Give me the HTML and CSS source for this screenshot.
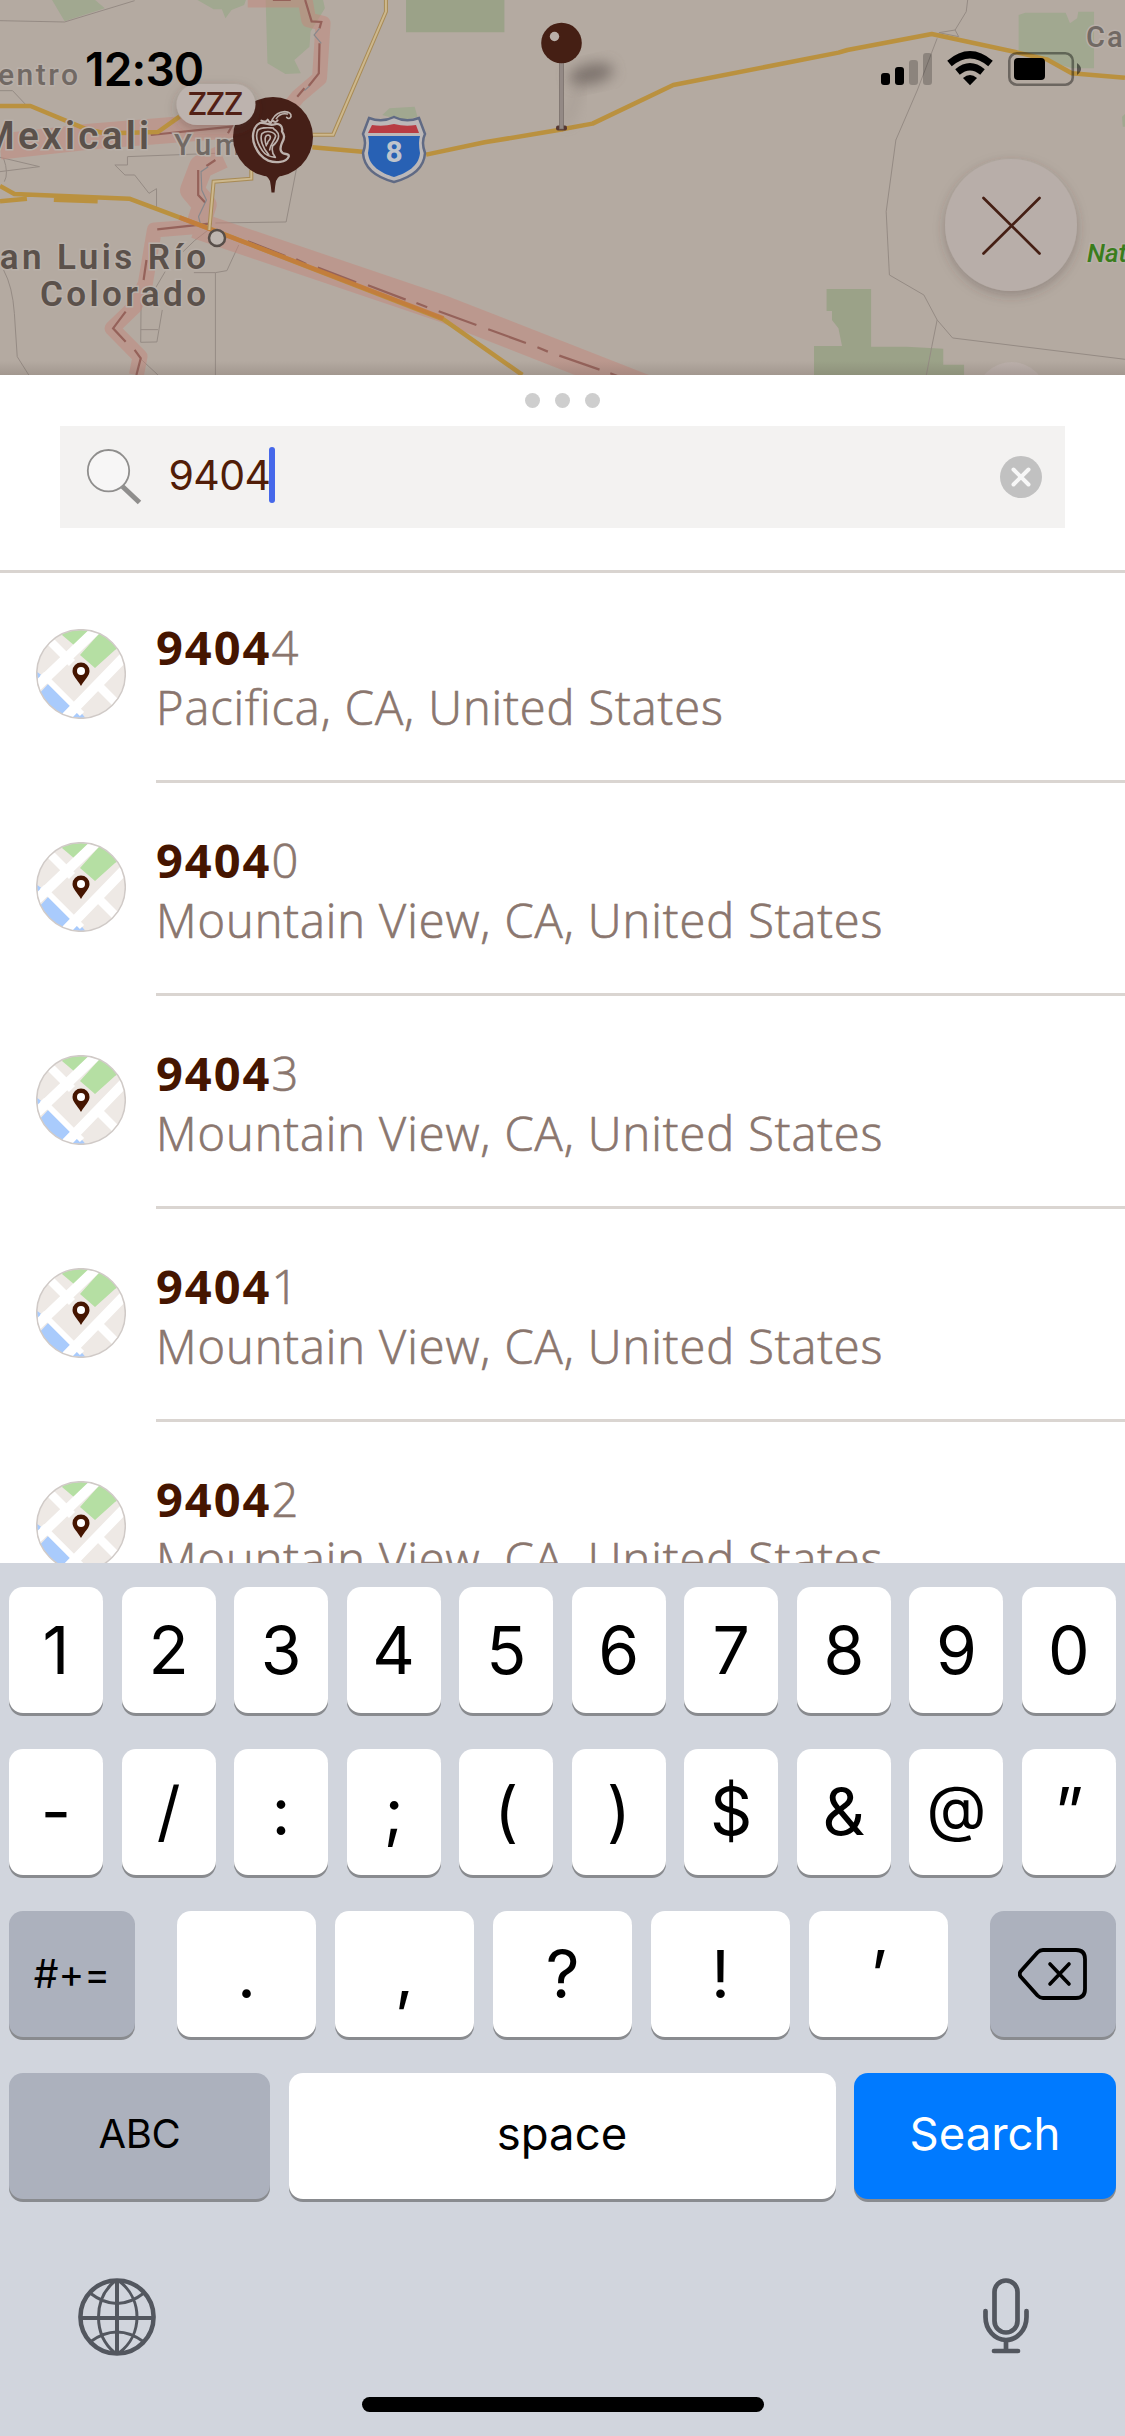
FILE: index.html
```html
<!DOCTYPE html>
<html lang="en">
<head>
<meta charset="utf-8">
<title>Location search</title>
<link rel="stylesheet" href="styles.css">
</head>
<body>
<svg class="defs" width="0" height="0" aria-hidden="true">
  <defs>
    <clipPath id="disc"><circle cx="45" cy="45" r="44"/></clipPath>
    <symbol id="place" viewBox="0 0 90 90">
      <g clip-path="url(#disc)">
        <rect width="90" height="90" fill="#eee9e5"/>
        <path d="M61 7L66 1L90 14L79 21L59 39L44 26ZM26 6L30 -2H60L39 17Z" fill="#b5dfa3"/>
        <path d="M13 54L36 78L25 92L2 66ZM0 42L8 48L0 56ZM42 80L52 92H32Z" fill="#a9cbfc"/>
        <path d="M62 -1L-4 62M92 24L30 88" stroke="#fff" stroke-width="10"/>
        <path d="M12 10L36 34M64 58L88 82" stroke="#fff" stroke-width="8.500"/>
        <path d="M6 45L46 85" stroke="#fff" stroke-width="6"/>
      </g>
      <path d="M45 57C41 50 36.500 47 36.500 42A8.500 8.500 0 0 1 53.500 42C53.500 47 49 50 45 57Z" fill="#451500"/>
      <circle cx="45" cy="42" r="4" fill="#fff"/>
      <circle cx="45" cy="45" r="44.300" fill="none" stroke="#d0cac7" stroke-width="1.500"/>
    </symbol>
  </defs>
</svg>
<main class="screen">
  <section class="map">
    <svg class="map-art" viewBox="0 0 1125 375" width="1125" height="375">
      <defs>
        <filter id="soft" x="-50%" y="-50%" width="200%" height="200%"><feGaussianBlur stdDeviation="7"/></filter>
        <filter id="lift" x="-30%" y="-30%" width="160%" height="160%"><feDropShadow dx="0" dy="4" stdDeviation="6" flood-color="#4b3a34" flood-opacity=".3"/></filter>
        <linearGradient id="edge" x2="0" y2="1"><stop stop-color="#5a4d48" stop-opacity="0"/><stop offset="1" stop-color="#5a4d48" stop-opacity=".2"/></linearGradient>
      </defs>
      <rect width="1125" height="375" fill="#b4aaa1"/>
      <g class="geo" transform="scale(.359 .3333)">
        <g fill="#9ba288">
          <path d="M145 0L180 64L292 25L265 0ZM550 0L595 28L618 28L628 55L645 30L680 15L685 0ZM740 0L745 190L795 222L838 220L820 180L862 140L865 95L905 25L900 0Z" fill="#a1a890"/>
          <path d="M1131 0H1405V97H1131Z"/>
          <path d="M1065 345L1085 325L1155 320L1163 350L1120 362Z" fill="#a1a890"/>
        </g>
        <g class="thin">
          <path d="M0 62L180 66L375 2M0 272L35 272L70 312M0 472L110 500L0 515M10 475Q25 520 12 545M600 460L355 470V495H320L348 525H375L415 580L436 566V625M827 500L797 666L600 669M665 735L632 812L600 818H540M600 818V1125M393 900L392 1027L437 1026L452 930M392 989H440M10 810Q35 860 40 940L48 1070L80 1125M580 690Q540 720 510 755M460 815L430 870M390 1075L440 1125"/>
        </g>
        <g class="border-glow">
          <path d="M690 0L850 0L860 60L900 70L890 235L830 290L800 330" class="narrow"/>
          <path d="M0 440L250 410L650 375" style="stroke-width:26"/>
          <path d="M620 470L560 500L535 570L570 615L550 680"/>
          <path d="M550 680L430 690L405 850L375 920L312 985L390 1070L380 1125" class="narrow"/>
          <path d="M545 675L1230 925L1870 1195" style="stroke-width:27"/>
        </g>
        <g class="border-line">
          <path d="M760 0H810M850 0L868 64L895 66L890 85M890 130L888 220L860 258M848 265L828 290M420 405L645 380L635 400M600 480L575 498M552 510V585L572 608M438 688L590 670M408 780L400 840M350 935L315 985L350 1025M375 1050L392 1075L380 1125"/>
          <path d="M630 705L655 713M690 724L795 768M825 778L853 792M885 803L992 847M1025 856L1130 899M1160 909L1190 922M1222 934L1327 975M1360 988L1465 1029M1497 1042L1526 1055M1558 1067L1670 1109M1700 1120L1720 1128"/>
        </g>
        <path class="river" d="M890 85L875 105L895 130M862 258L848 272M580 500L560 515L562 570L575 600L553 650L560 680"/>
        <g class="road">
          <path d="M0 318H85L235 385L310 405M310 400L440 396L500 350M0 558L40 582L360 596L600 693L1235 958L1455 1125M0 604L75 596M150 599L272 604M870 442L1010 455M1187 464L1350 427L1568 388"/>
        </g>
        <path d="M500 652L1235 955" stroke="#c47b3c" stroke-width="4.500" fill="none" opacity=".85"/>
        <g class="minor-case"><path d="M1075 0V35L928 404H870M700 510V536L595 545L583 690"/></g>
        <g class="minor"><path d="M1075 0V35L928 404H870M700 510V536L595 545L583 690"/></g>
      </g>
      <g class="geo" transform="translate(562 0) scale(.359 .3333)">
        <path d="M1272 45L1290 38H1403L1415 70L1435 55L1438 35H1482V205H1420L1272 155ZM1560 350L1570 340V380H1562Z" fill="#a1a890"/>
        <path d="M737 867H861V1040H960L1062 1046V1094H1120V1125H702V1038H780L770 985L752 960V933H737Z" fill="#9ba288"/>
        <path class="thin-line" d="M1130 0L1126 35L1095 90L1050 98L1105 110L1095 90M1045 115L990 270L930 420L903 635L912 825L1008 885L1045 960L1088 1014L1568 1078M1045 960L1030 1040L1015 1125"/>
        <g class="road"><path d="M0 388L85 371L310 255L770 158L795 150L1030 102L1270 158L1350 178L1420 220L1568 233"/></g>
      </g>
      <circle cx="1011.500" cy="397" r="35" fill="#bbb0ab"/>
      <rect y="361" width="1125" height="14" fill="url(#edge)"/>

      <g class="place-label">
        <text x="78" y="85" text-anchor="end" font-size="30" textLength="102">Centro</text>
        <text x="149" y="149" text-anchor="end" class="strong" font-size="38.500" textLength="168">Mexicali</text>
        <text x="174" y="155" font-size="29" textLength="86">Yuma</text>
        <text x="206" y="269" text-anchor="end" class="strong" font-size="35" textLength="231">San Luis Río</text>
        <text x="206" y="306" text-anchor="end" class="strong" font-size="35" textLength="166">Colorado</text>
        <text x="1086" y="47" font-size="29" letter-spacing="2">Ca</text>
        <text x="1087" y="262" font-size="26" class="park">Nat</text>
      </g>
      <circle cx="217" cy="238" r="8" fill="#bdb5af" stroke="#574e49" stroke-width="2.500"/>

      <path d="M369 118Q382 123 394 117Q406 123 419 118L425 134Q421 142 425 153C424 170 409 178 394 182C379 178 364 170 363 153Q367 142 363 134Z" fill="#bcb8b8" stroke="#606a84" stroke-width="2.500"/>
      <path d="M372 125Q383 127 394 124Q405 127 416 125L419 133H368Z" fill="#b83c43"/>
      <path d="M368 136H420Q418 142 420 153C419 166 407 173 394 177C381 173 369 166 368 153Q370 142 368 136Z" fill="#2861b4"/>
      <text x="394" y="161.500" text-anchor="middle" class="shield-text">8</text>

      <circle cx="273" cy="137" r="40" fill="#451f17"/>
      <path d="M255 171Q268 175 270 181Q271 186 271.500 192.500H274.500Q275 186 276 181Q278 175 291 171Z" fill="#451f17"/>
      <g transform="translate(160 76) scale(.3333)" fill="none" stroke="#bdb2ad" stroke-linecap="round" stroke-linejoin="round">
        <path d="M304 134Q318 141 323 131L331 142L337 133Q347 143 353 133" stroke-width="6"/>
        <path d="M337 130Q350 108 374 107Q395 108 393 122Q388 132 380 124M349 128Q360 110 382 114" stroke-width="5"/>
        <path d="M300 141C278 151 274 185 285 210C294 229 302 243 325 254C346 262 379 260 386 242Q388 235 378 234C362 233 358 220 365 203C375 186 374 178 366 166C370 149 356 140 343 145C325 151 315 136 300 141Z" stroke-width="7"/>
        <path d="M340 156C319 155 306 153 294 162C284 180 293 203 307 224Q319 242 346 244Q333 229 338 210C356 194 362 177 348 164Q337 156 340 156M326 236C309 217 298 188 306 173C319 162 343 166 347 180C344 195 330 205 329 222M319 209C312 187 316 177 325 177Q335 180 329 191Q322 197 322 204" stroke-width="5"/>
      </g>
      <rect x="176.500" y="84" width="79" height="41" rx="20.500" fill="#bdb3ae" filter="url(#lift)"/>
      <text x="215.500" y="115" text-anchor="middle" class="zzz" textLength="56">ZZZ</text>

      <ellipse cx="591" cy="74" rx="23" ry="10" transform="rotate(-12 591 74)" fill="#6b615b" opacity=".75" filter="url(#soft)"/>
      <path d="M566 125L580 84" stroke="#6b615b" stroke-width="6" opacity=".25" filter="url(#soft)"/>
      <rect x="556" y="125.500" width="11" height="5" rx="2" fill="#563831"/>
      <rect x="559.500" y="60" width="4" height="69" fill="#938985" stroke="#756b67" stroke-width=".7"/>
      <circle cx="561.500" cy="43" r="20.300" fill="#451f14"/>
      <circle cx="554.500" cy="36.500" r="4.700" fill="#b9afa9"/>

      <circle cx="1011" cy="225" r="66" fill="#b8aea9" filter="url(#lift)"/>
      <path d="M983.500 198L1039.500 253.500M1039.500 198L983.500 253.500" stroke="#451f14" stroke-width="2.700" stroke-linecap="round"/>
    </svg>
    <header class="status">
      <span class="clock">12:30</span>
      <svg class="status-icons" viewBox="880 50 204 38" width="204" height="38">
        <rect x="881" y="73" width="9" height="12" rx="3"/>
        <rect x="895" y="67" width="9" height="18" rx="3"/>
        <rect x="909" y="60" width="9" height="25" rx="3" fill-opacity=".22"/>
        <rect x="923" y="53" width="9" height="32" rx="3" fill-opacity=".22"/>
        <path d="M949.500 63.500Q970 46 990.500 63.500" fill="none" stroke="#000" stroke-width="7"/>
        <path d="M957.500 72Q970 61.500 982.500 72" fill="none" stroke="#000" stroke-width="7"/>
        <path d="M963 78Q970 72 977 78L970 85.200Z"/>
        <rect x="1009.300" y="53.300" width="63.500" height="31.400" rx="7.500" fill="none" stroke="#000" stroke-opacity=".4" stroke-width="2.600"/>
        <rect x="1014" y="58" width="31" height="22" rx="4"/>
        <path d="M1077 63Q1081 66 1081 69T1077 75Z" fill-opacity=".5"/>
      </svg>
    </header>
  </section>

  <section class="sheet">
    <div class="search-head">
      <div class="grabber"><i></i><i></i><i></i></div>
      <div class="search-box">
        <svg width="56" height="60" viewBox="86 447 56 60">
          <path d="M122.500 486.500L139.500 502.500" stroke="#8f8e8d" stroke-width="5"/>
          <circle cx="108.500" cy="470.700" r="20.700" fill="#f7f6f6" stroke="#8f8e8d" stroke-width="1.800"/>
        </svg>
        <span class="query">9404</span><span class="caret"></span>
        <svg class="clear" width="42" height="42" viewBox="0 0 42 42">
          <circle cx="21" cy="21" r="21" fill="#c1c1c1"/>
          <path d="M13.500 13.500L28.500 28.500M28.500 13.500L13.500 28.500" stroke="#f7f7f7" stroke-width="4" stroke-linecap="round"/>
        </svg>
      </div>
    </div>
    <ul class="results">
      <li><svg class="thumb"><use href="#place"/></svg><div class="entry"><p class="zip"><b>9404</b>4</p><p class="city">Pacifica, CA, United States</p></div></li>
      <li><svg class="thumb"><use href="#place"/></svg><div class="entry"><p class="zip"><b>9404</b>0</p><p class="city">Mountain View, CA, United States</p></div></li>
      <li><svg class="thumb"><use href="#place"/></svg><div class="entry"><p class="zip"><b>9404</b>3</p><p class="city">Mountain View, CA, United States</p></div></li>
      <li><svg class="thumb"><use href="#place"/></svg><div class="entry"><p class="zip"><b>9404</b>1</p><p class="city">Mountain View, CA, United States</p></div></li>
      <li><svg class="thumb"><use href="#place"/></svg><div class="entry"><p class="zip"><b>9404</b>2</p><p class="city">Mountain View, CA, United States</p></div></li>
    </ul>
  </section>

  <section class="keyboard">
    <div class="row ten"><span class="key">1</span><span class="key">2</span><span class="key">3</span><span class="key">4</span><span class="key">5</span><span class="key">6</span><span class="key">7</span><span class="key">8</span><span class="key">9</span><span class="key">0</span></div>
    <div class="row ten signs"><span class="key">-</span><span class="key">/</span><span class="key">:</span><span class="key">;</span><span class="key">(</span><span class="key">)</span><span class="key">$</span><span class="key">&amp;</span><span class="key at">@</span><span class="key">”</span></div>
    <div class="row punct">
      <span class="key gray symbols">#+=</span>
      <div class="marks"><span class="key">.</span><span class="key">,</span><span class="key">?</span><span class="key">!</span><span class="key">’</span></div>
      <span class="key gray">
        <svg width="70" height="54" viewBox="0 0 70 54" fill="none" stroke="#000" stroke-linecap="round" stroke-linejoin="round">
          <path d="M25 3H58Q67 3 67 12V42Q67 51 58 51H25Q22 51 19.500 48.500L2.500 29.500Q1 27 2.500 24.500L19.500 5.500Q22 3 25 3Z" stroke-width="3.800"/>
          <path d="M32 17L51 37M51 17L32 37" stroke-width="3.600"/>
        </svg>
      </span>
    </div>
    <div class="row bottom"><span class="key gray abc">ABC</span><span class="key space">space</span><span class="key go">Search</span></div>
    <div class="tools">
      <svg width="78" height="78" viewBox="-39 -39 78 78" fill="none" stroke="#53575f">
        <circle r="36.600" stroke-width="4.500"/>
        <path d="M0-37V37M-37 1H37" stroke-width="4"/>
        <path d="M-2-36C-24-18-24 18-2 36M2-36C26-18 26 18 2 36M-27-24Q0-3 27-24M-27 25Q0 5 27 25" stroke-width="3"/>
      </svg>
      <svg width="46" height="76" viewBox="0 0 46 76" fill="none" stroke="#53575f" stroke-width="4.700" stroke-linecap="round">
        <rect x="11.500" y="2.500" width="23" height="52" rx="11.500"/>
        <path d="M2.500 33V39A20.500 23 0 0 0 43.500 39V33M23 63V73M11 73H35"/>
      </svg>
    </div>
    <div class="home"></div>
  </section>
</main>
</body>
</html>
```
FILE: styles.css
```css
* { box-sizing: border-box; }
body { margin: 0; font-family: Inter, "Liberation Sans", sans-serif; color: #000; }
.defs { display: block; }
.screen { width: 1125px; height: 2436px; overflow: hidden; display: flex; flex-direction: column; background: #fff; }

.map { height: 375px; flex: none; display: grid; overflow: hidden; }
.map > * { grid-area: 1 / 1; }
.map-art { display: block; }
.geo path { vector-effect: non-scaling-stroke; }
.thin path, .thin-line { fill: none; stroke: #958b84; stroke-width: 1; }
.border-glow { opacity: .5; }
.border-glow path { fill: none; stroke: #c3877c; stroke-width: 24; stroke-linejoin: round; }
.border-glow .narrow { stroke-width: 15; }
.border-line path { fill: none; stroke: #95625a; stroke-width: 2.2; }
.river { fill: none; stroke: #88888c; stroke-width: 1.2; }
.road path { fill: none; stroke: #ba913f; stroke-width: 4.5; stroke-linejoin: round; }
.minor-case path { fill: none; stroke: #a88b56; stroke-width: 4; }
.minor path { fill: none; stroke: #cdb88d; stroke-width: 2; }
.place-label { font-family: Roboto, sans-serif; font-weight: 500; fill: #716964; paint-order: stroke; stroke: #b9b0a9; stroke-width: 3px; }
.place-label .strong { fill: #5b514b; font-weight: 600; }
.place-label .park { fill: #3a7d1c; font-style: italic; }
.shield-text { font: 700 30px Roboto, sans-serif; fill: #bfc4cc; }
.zzz { font: 500 31px Inter, sans-serif; fill: #522015; }
.status { display: flex; justify-content: space-between; align-items: flex-start; padding: 50px 41px 0 85px; }
.clock { font-size: 46px; font-weight: 600; line-height: 38px; letter-spacing: -.8px; }

.sheet { height: 1188px; flex: none; overflow: hidden; }
.search-head { height: 198px; padding: 18px 60px 0; border-bottom: 3px solid #d9d4d0; }
.grabber { display: flex; justify-content: center; gap: 15px; height: 33px; }
.grabber i { width: 15px; height: 15px; border-radius: 50%; background: #cecece; }
.search-box { height: 102px; display: flex; align-items: center; padding: 0 23px 0 26px; background: #f3f2f1; }
.query { margin: 0 0 4px 26.5px; color: #511d08; font-size: 41px; line-height: 56px; letter-spacing: -.6px; }
.caret { width: 6px; height: 56px; margin: 0 0 4px -1px; border-radius: 3px; background: #4668ea; }
.clear { margin-left: auto; }
.results { margin: 0; padding: 0; list-style: none; }
.results li { height: 213px; display: flex; padding-left: 36px; }
.thumb { width: 90px; height: 90px; margin-top: 56px; flex: none; }
.entry { flex: 1; height: 210px; margin-left: 30px; padding-top: 44px; border-bottom: 3px solid #dad5d1; }
.entry p { margin: 0; color: #8a766e; font-family: "Open Sans", sans-serif; font-weight: 300; white-space: nowrap; line-height: 60px; -webkit-text-stroke: .7px #8a766e; }
.zip { font-size: 47px; letter-spacing: 2px; }
.zip b { color: #451500; font-weight: 700; -webkit-text-stroke: 0; }
.city { font-size: 47px; letter-spacing: .92px; }

.keyboard { height: 873px; flex: none; padding: 24px 9px 0; display: flex; flex-direction: column; background: #d1d5dd; }
.row { height: 126px; margin-bottom: 36px; flex: none; display: grid; }
.ten { grid-template-columns: repeat(10, 94px); justify-content: space-between; }
.punct { grid-template-columns: 126px 771px 126px; justify-content: space-between; }
.marks { display: grid; grid-template-columns: repeat(5, 139px); justify-content: space-between; }
.bottom { grid-template-columns: 261px 547px 262px; justify-content: space-between; }
.key { display: flex; align-items: center; justify-content: center; border-radius: 14px; background: #fff; box-shadow: 0 3px 0 #898b8f; font-size: 66px; line-height: 80px; }
.signs .key { padding-bottom: 3px; }
.signs .at { font-size: 62px; padding-bottom: 8px; }
.gray { background: #acb1bd; }
.symbols { font-size: 39px; }
.bottom .key { padding-bottom: 4px; }
.abc { font-size: 40px; letter-spacing: -.4px; }
.space { font-size: 45.5px; }
.go { font-size: 45.5px; background: #007aff; color: #fff; }
.tools { display: flex; justify-content: space-between; padding: 43px 87px 0 69px; }
.home { width: 402px; height: 15px; margin: 41px auto 0; border-radius: 8px; background: #000; }
```
